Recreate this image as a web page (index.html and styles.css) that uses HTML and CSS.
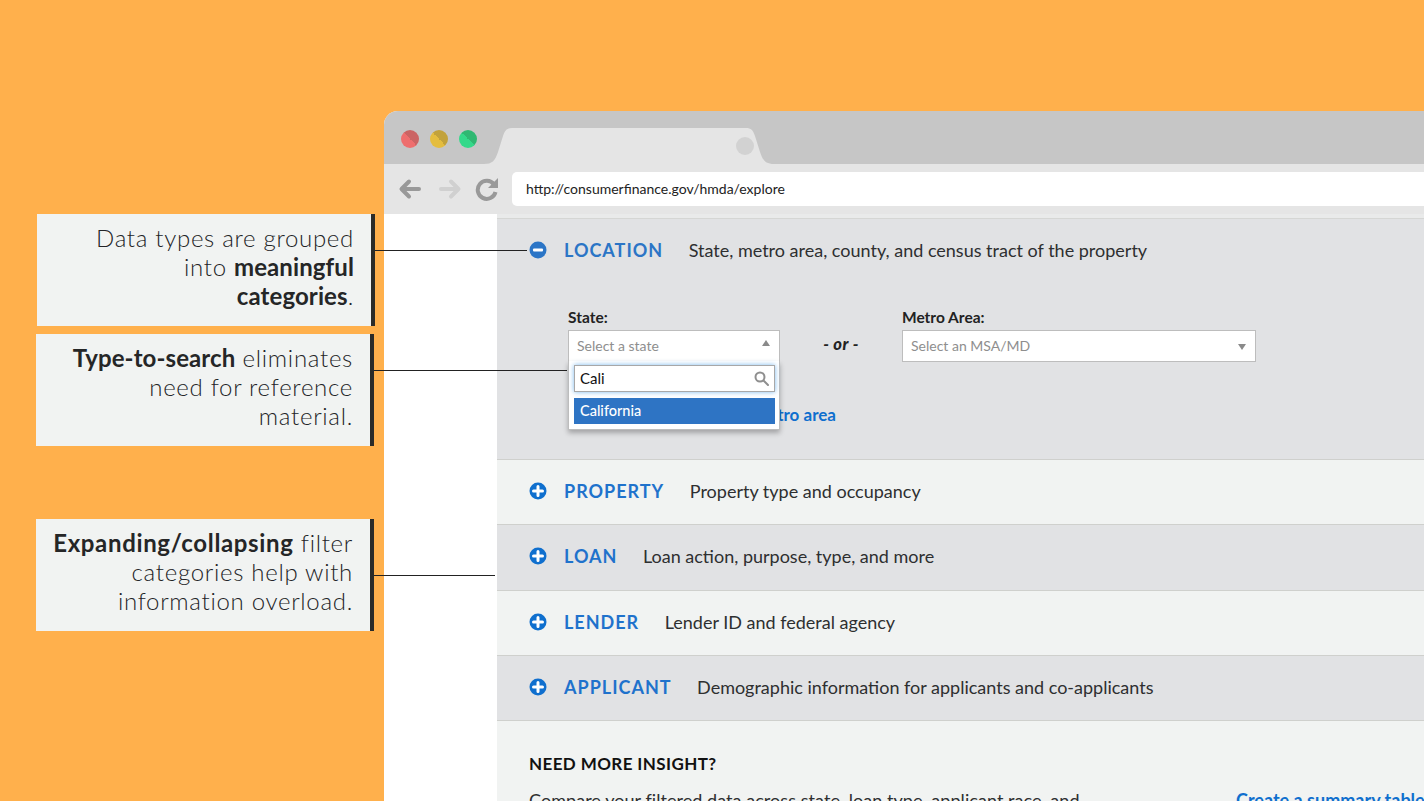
FILE: index.html
```html
<!DOCTYPE html>
<html lang="en">
<head>
<meta charset="utf-8">
<title>HMDA explore</title>
<link rel="stylesheet" href="styles.css">
</head>
<body>
<div class="stage">
  <aside class="notes">
    <div class="note note-a"><p>Data types are grouped<br>into <b>meaningful<br>categories</b>.</p><i class="leader leader-a"></i></div>
    <div class="note note-b"><p><b>Type-to-search</b> eliminates<br>need for reference<br>material.</p><i class="leader leader-b"></i></div>
    <div class="note note-c"><p><b>Expanding/collapsing</b> filter<br>categories help with<br>information overload.</p><i class="leader leader-c"></i></div>
  </aside>
  <main class="browser">
    <div class="tabbar">
      <div class="lights">
        <span class="light red"></span><span class="light yellow"></span><span class="light green"></span>
      </div>
      <svg class="tab" width="290" height="37" viewBox="0 0 290 37"><path d="M0 37c8 0 11-3 14-12l5-16c2-6 4-8 9-8h234c5 0 7 2 9 8l5 16c3 9 6 12 14 12z" fill="#e5e5e5"/><circle cx="261" cy="19" r="9" fill="#d2d2d2"/></svg>
    </div>
    <div class="toolbar">
      <svg class="nav" width="24" height="24" viewBox="0 0 24 24" fill="none" stroke="#999" stroke-width="4" stroke-linecap="round" stroke-linejoin="round"><path d="M21 12H4M11 4.500l-7.500 7.500 7.500 7.500"/></svg>
      <svg class="nav" width="24" height="24" viewBox="0 0 24 24" fill="none" stroke="#d0d0d0" stroke-width="4" stroke-linecap="round" stroke-linejoin="round"><path d="M3 12h17M13 4.500l7.500 7.500-7.500 7.500"/></svg>
      <svg class="nav" width="24" height="24" viewBox="0 0 24 24" fill="none"><path d="M19 7.500A9 9 0 1 0 20.500 15" stroke="#999" stroke-width="4"/><path d="M23 1v10H13z" fill="#999"/></svg>
      <div class="address">http://consumerfinance.gov/hmda/explore</div>
    </div>
    <div class="page">
      <div class="content">
        <section class="cat open">
          <header class="cat-head">
            <svg class="toggle" width="18" height="18" viewBox="0 0 18 18"><circle cx="9" cy="9" r="8.500" fill="#2b75c6"/><rect x="4" y="7.500" width="10" height="3" rx="1" fill="#fff"/></svg>
            <h2>LOCATION</h2><span class="desc">State, metro area, county, and census tract of the property</span>
          </header>
          <div class="filters">
            <div class="field">
              <label>State:</label>
              <div class="select is-open">
                <span class="placeholder">Select a state</span><i class="caret up"></i>
                <div class="dropdown">
                  <div class="search"><span>Cali</span>
                    <svg width="15" height="15" viewBox="0 0 15 15" fill="none" stroke="#8f8f8f" stroke-width="2"><circle cx="6" cy="6" r="4.500"/><path d="M9.500 9.500l4.500 4.500" stroke-linecap="round"/></svg>
                  </div>
                  <div class="option">California</div>
                </div>
              </div>
              <a class="addlink">Add another metro area</a>
            </div>
            <div class="or">- or -</div>
            <div class="field wide">
              <label>Metro Area:</label>
              <div class="select"><span class="placeholder">Select an MSA/MD</span><i class="caret"></i></div>
            </div>
          </div>
        </section>
        <section class="cat light-row"><header class="cat-head">
          <svg class="toggle" width="18" height="18" viewBox="0 0 18 18"><circle cx="9" cy="9" r="8.500" fill="#0f6fce"/><path d="M9 4.500v9M4.500 9h9" stroke="#fff" stroke-width="3" stroke-linecap="round"/></svg>
          <h2>PROPERTY</h2><span class="desc">Property type and occupancy</span></header></section>
        <section class="cat"><header class="cat-head">
          <svg class="toggle" width="18" height="18" viewBox="0 0 18 18"><circle cx="9" cy="9" r="8.500" fill="#0f6fce"/><path d="M9 4.500v9M4.500 9h9" stroke="#fff" stroke-width="3" stroke-linecap="round"/></svg>
          <h2>LOAN</h2><span class="desc">Loan action, purpose, type, and more</span></header></section>
        <section class="cat light-row"><header class="cat-head">
          <svg class="toggle" width="18" height="18" viewBox="0 0 18 18"><circle cx="9" cy="9" r="8.500" fill="#0f6fce"/><path d="M9 4.500v9M4.500 9h9" stroke="#fff" stroke-width="3" stroke-linecap="round"/></svg>
          <h2>LENDER</h2><span class="desc">Lender ID and federal agency</span></header></section>
        <section class="cat"><header class="cat-head">
          <svg class="toggle" width="18" height="18" viewBox="0 0 18 18"><circle cx="9" cy="9" r="8.500" fill="#0f6fce"/><path d="M9 4.500v9M4.500 9h9" stroke="#fff" stroke-width="3" stroke-linecap="round"/></svg>
          <h2>APPLICANT</h2><span class="desc">Demographic information for applicants and co-applicants</span></header></section>
        <section class="insight">
          <h3>NEED MORE INSIGHT?</h3>
          <div class="insight-row">
            <p>Compare your filtered data across state, loan type, applicant race, and</p>
            <a>Create a summary table</a>
          </div>
        </section>
      </div>
    </div>
  </main>
</div>
</body>
</html>
```
FILE: styles.css
```css
html, body { margin: 0; padding: 0; }
body { width: 1424px; height: 801px; overflow: hidden; background: #ffb04c; font-family: "Lato", "Open Sans", sans-serif; }
.stage { display: flex; width: 1424px; height: 801px; overflow: hidden; }

.notes { width: 384px; flex: none; display: flex; flex-direction: column; padding: 214px 0 0 36px; box-sizing: border-box; }
.note { position: relative; width: 334px; height: 112px; background: #f1f3f2; border-right: 4px solid #2b2b28; box-sizing: content-box; }
.note p { margin: 0; padding: 9px 17px 0 0; font-size: 24px; line-height: 29px; font-weight: 300; letter-spacing: .7px; color: #232427; text-align: right; }
.note b { font-weight: 700; letter-spacing: .1px; color: #252627; }
.note-a { margin-left: 1px; }
.note-b { margin-top: 8px; }
.note-c { margin-top: 73px; }
.note-c b { letter-spacing: .65px; }
.leader { position: absolute; height: 1px; background: #222; left: 338px; }
.leader-a { top: 36px; width: 152px; }
.leader-b { top: 36px; width: 193px; }
.leader-c { top: 56px; width: 121px; }

.browser { flex: 1; margin-top: 111px; background: #fff; border-top-left-radius: 14px; overflow: hidden; display: flex; flex-direction: column; min-width: 0; }
.tabbar { height: 53px; flex: none; background: #c6c6c6; display: flex; position: relative; }
.lights { display: flex; gap: 11px; padding: 19px 0 0 17px; }
.light { width: 18px; height: 18px; border-radius: 50%; }
.red { background: linear-gradient(45deg, #ee6e6e 50%, #cb6464 50%); }
.yellow { background: linear-gradient(45deg, #e4bd3f 50%, #c2a23b 50%); }
.green { background: linear-gradient(45deg, #34d98a 50%, #2fb872 50%); }
.tab { position: absolute; left: 100px; top: 16px; }
.toolbar { height: 50px; flex: none; background: #e5e5e5; display: flex; align-items: center; padding: 0 0 0 14px; box-sizing: border-box; }
.nav { flex: none; margin-right: 16px; }
.nav:nth-child(2) { margin-right: 13px; }
.nav:nth-child(3) { margin-right: 13px; }
.address { flex: 1; height: 34px; background: #fff; border-radius: 5px 0 0 5px; padding-left: 14px; font-size: 14px; line-height: 34px; color: #222; }

.page { flex: 1; padding-left: 113px; min-height: 0; }
.content { border-top: 4px solid #e9eaea; background: #f1f3f2; height: 100%; }
.cat { background: #e1e2e4; border-top: 1px solid #cfd0cd; box-sizing: border-box; height: 65.250px; }
.cat.open { height: 241px; border-top: 1px solid #d5d6d4; }
.cat.light-row { background: #f1f3f2; }
.cat-head { display: flex; align-items: center; height: 62px; padding-left: 32px; }
.toggle { flex: none; margin-right: 17px; }
.cat-head h2 { margin: 0 25.500px 0 0; font-size: 18px; font-weight: 700; letter-spacing: 1px; color: #1f72cc; }
.cat.open h2 { color: #2b75c6; }
.desc { font-size: 18px; color: #2e2f30; }

.filters { display: flex; padding: 0 0 0 71px; margin-top: 27px; }
.field { width: 212px; flex: none; }
.field.wide { width: 354px; }
.field label { display: block; font-size: 15.500px; font-weight: 700; color: #222; height: 18px; line-height: 18px; margin-bottom: 4px; }
.select { position: relative; height: 32px; background: #fff; border: 1px solid #bdbdbd; box-sizing: border-box; padding: 0 8px; line-height: 28px; }
.placeholder { font-size: 14px; color: #8e8e8e; }
.caret { position: absolute; right: 9px; top: 13px; width: 0; height: 0; border-left: 4px solid transparent; border-right: 4px solid transparent; border-top: 6px solid #8a8a8a; }
.caret.up { border-top: 0; border-bottom: 6px solid #8a8a8a; top: 9px; }
.dropdown { position: absolute; z-index: 2; left: -1px; right: -1px; top: 30px; height: 69px; background: #fff; border: 1px solid #bdbdbd; border-top: 0; box-sizing: border-box; box-shadow: 0 3px 5px rgba(0,0,0,.28); padding: 4px 4px 0 5px; }
.search { display: flex; align-items: center; justify-content: space-between; height: 27px; box-sizing: border-box; border: 1px solid #a8a8a8; box-shadow: 0 0 5px #7ab8ee; background: #fff; padding: 0 5px; font-size: 15px; line-height: 25px; color: #111; }
.option { margin-top: 6px; height: 26px; background: #2e74c4; color: #fff; font-size: 14.500px; font-weight: 500; line-height: 25px; padding-left: 6px; }
.addlink { display: block; margin-top: 43px; padding-left: 88px; line-height: 20px; font-size: 17px; font-weight: 700; color: #0f6fce; white-space: nowrap; }
.or { width: 122px; flex: none; text-align: center; font-size: 16.500px; letter-spacing: .5px; font-weight: 900; font-style: italic; color: #222; padding-top: 26px; box-sizing: border-box; }

.insight { border-top: 1px solid #cfd0cd; background: #f1f3f2; padding: 33px 0 0 32px; }
.insight h3 { margin: 0; font-size: 17px; font-weight: 700; letter-spacing: .4px; color: #111; line-height: 20px; }
.insight-row { display: flex; margin-top: 15px; }
.insight-row p { margin: 0; width: 707px; flex: none; font-size: 18px; letter-spacing: .05px; line-height: 22px; color: #2e2f30; }
.insight-row a { font-size: 18px; line-height: 22px; font-weight: 700; color: #0f6fce; white-space: nowrap; }
```
